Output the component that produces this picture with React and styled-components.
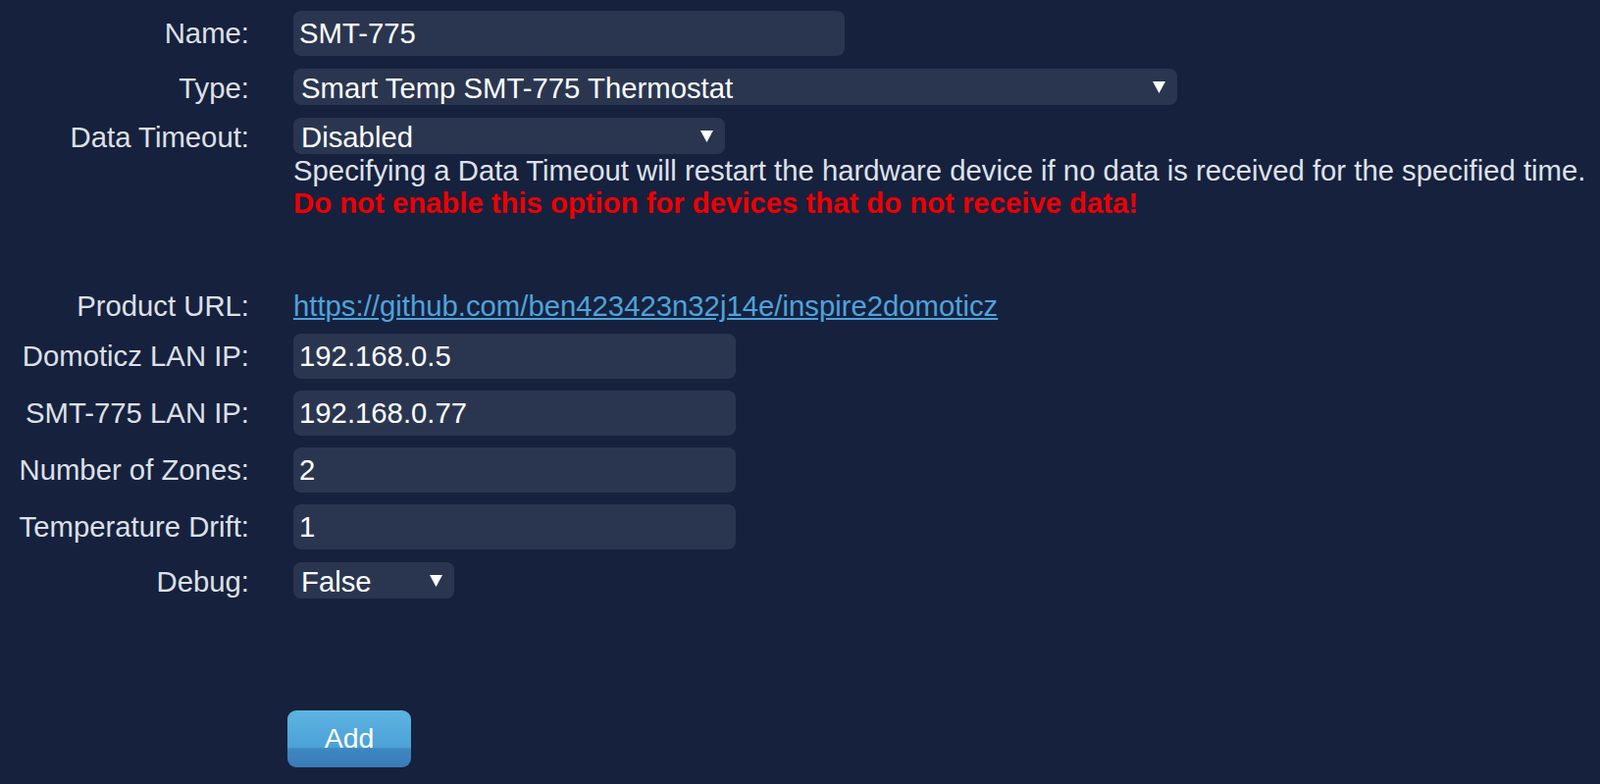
import React from 'react'
import styled, { createGlobalStyle } from 'styled-components'

const GlobalStyle = createGlobalStyle`
  html, body {
    margin: 0;
    padding: 0;
    background: #16213e;
  }
  body {
    font-family: 'Liberation Sans', Arial, sans-serif;
    font-size: 29.3px;
    color: #dde0e7;
  }
`

const Page = styled.div`
  min-height: 799px;
  padding-top: 11px;
  box-sizing: border-box;
  background: #16213e;
`

const Row = styled.div`
  display: grid;
  grid-template-columns: 254px 1fr;
  column-gap: 45px;
  align-items: baseline;
  justify-items: start;
  margin-top: ${p => p.$gap || 0}px;
`

const Label = styled.label`
  justify-self: end;
  line-height: 33px;
  color: #dde0e7;
  white-space: nowrap;
`

const TextInput = styled.input`
  box-sizing: border-box;
  width: ${p => p.$width}px;
  height: 46px;
  padding: 0 6px;
  border: none;
  border-radius: 8px;
  background: #2a3650;
  color: #ffffff;
  font-family: inherit;
  font-size: 29.3px;
  line-height: 37px;
  outline: none;
`

const Select = styled.div`
  box-sizing: border-box;
  width: ${p => p.$width}px;
  height: 37px;
  padding: 1px 12px 0 8px;
  display: flex;
  align-items: baseline;
  justify-content: space-between;
  border-radius: 8px;
  background: #2a3650;
  color: #ffffff;
  line-height: 37px;
`

const Arrow = styled.svg`
  flex: none;
  align-self: center;
  width: 13px;
  height: 12px;
  fill: #ffffff;
`

const Field = styled.div``

const Help = styled.div`
  line-height: 33.4px;
  color: #dfe2ea;
  white-space: nowrap;
`

const Warning = styled.div`
  line-height: 33.4px;
  color: #ee0000;
  font-weight: bold;
  white-space: nowrap;
`

const Link = styled.a`
  line-height: 33px;
  color: #4fa3db;
  text-decoration: underline;
`

const ButtonRow = styled.div`
  margin-top: 114px;
  padding-left: 293px;
`

const AddButton = styled.button`
  width: 126px;
  height: 58px;
  border: none;
  border-radius: 9px;
  background: linear-gradient(#5db3e1 0%, #4ca2d6 64%, #3e86c0 68%, #3a7db8 100%);
  color: #ffffff;
  font-family: inherit;
  font-size: 28.5px;
  padding: 0 0 1px;
  cursor: pointer;
`

const Dropdown = ({ width, value }) => (
  <Select $width={width}>
    <span>{value}</span>
    <Arrow viewBox="0 0 13 12">
      <polygon points="0,0 13,0 6.5,12" />
    </Arrow>
  </Select>
)

export default function App() {
  return (
    <Page>
      <GlobalStyle />
      <Row>
        <Label>Name:</Label>
        <TextInput $width={562} defaultValue="SMT-775" />
      </Row>
      <Row $gap={13}>
        <Label>Type:</Label>
        <Dropdown width={901} value="Smart Temp SMT-775 Thermostat" />
      </Row>
      <Row $gap={13}>
        <Label>Data Timeout:</Label>
        <Field>
          <Dropdown width={440} value="Disabled" />
          <Help>Specifying a Data Timeout will restart the hardware device if no data is received for the specified time.</Help>
          <Warning>Do not enable this option for devices that do not receive data!</Warning>
        </Field>
      </Row>
      <Row $gap={71}>
        <Label>Product URL:</Label>
        <Link href="#">https://github.com/ben423423n32j14e/inspire2domoticz</Link>
      </Row>
      <Row $gap={12}>
        <Label>Domoticz LAN IP:</Label>
        <TextInput $width={451} defaultValue="192.168.0.5" />
      </Row>
      <Row $gap={12}>
        <Label>SMT-775 LAN IP:</Label>
        <TextInput $width={451} defaultValue="192.168.0.77" />
      </Row>
      <Row $gap={12}>
        <Label>Number of Zones:</Label>
        <TextInput $width={451} defaultValue="2" />
      </Row>
      <Row $gap={12}>
        <Label>Temperature Drift:</Label>
        <TextInput $width={451} defaultValue="1" />
      </Row>
      <Row $gap={13}>
        <Label>Debug:</Label>
        <Dropdown width={164} value="False" />
      </Row>
      <ButtonRow>
        <AddButton>Add</AddButton>
      </ButtonRow>
    </Page>
  )
}
